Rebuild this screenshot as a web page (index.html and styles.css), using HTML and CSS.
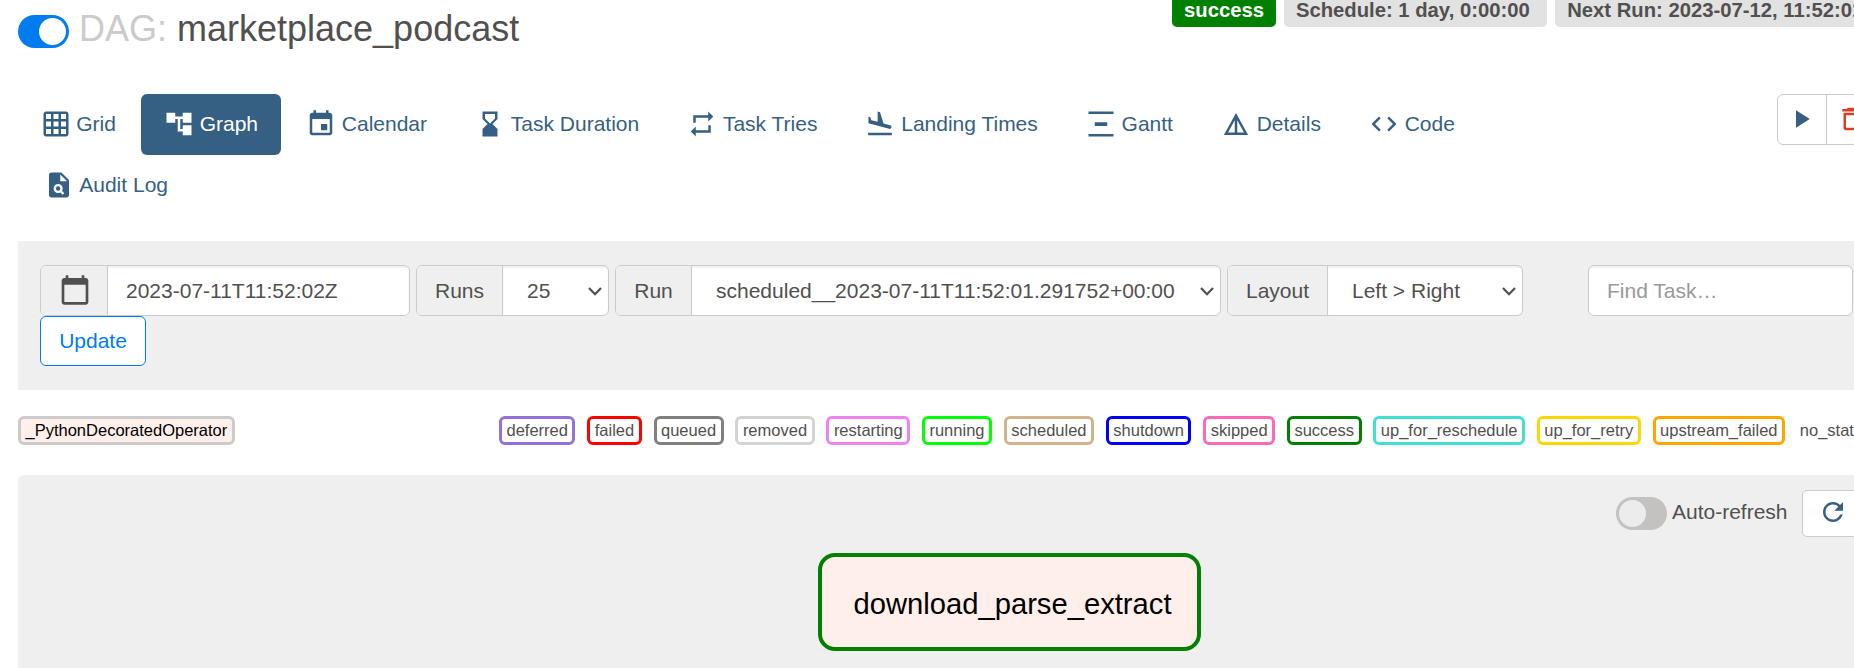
FILE: index.html
```
<!DOCTYPE html>
<html lang="en">
<head>
<meta charset="utf-8">
<title>marketplace_podcast - Graph</title>
<link rel="stylesheet" href="styles.css">
</head>
<body>
<main class="page">
  <header class="head">
    <h3 class="title"><span class="switch on"></span><span class="muted">DAG:</span><span>marketplace_podcast</span></h3>
    <div class="labels">
      <span class="label ok">success</span>
      <span class="label">Schedule: 1 day, 0:00:00</span>
      <span class="label">Next Run: 2023-07-12, 11:52:01</span>
    </div>
  </header>

  <div class="navrow">
    <ul class="pills">
      <li><svg class="icon" viewBox="0 0 24 24"><path d="M20 2H4c-1.100 0-2 .9-2 2v16c0 1.100.9 2 2 2h16c1.100 0 2-.9 2-2V4c0-1.100-.9-2-2-2zM8 20H4v-4h4v4zm0-6H4v-4h4v4zm0-6H4V4h4v4zm6 12h-4v-4h4v4zm0-6h-4v-4h4v4zm0-6h-4V4h4v4zm6 12h-4v-4h4v4zm0-6h-4v-4h4v4zm0-6h-4V4h4v4z"/></svg>Grid</li>
      <li class="active"><svg class="icon" viewBox="0 0 24 24"><path d="M22 11V3h-7v3H9V3H2v8h7V8h2v10h4v3h7v-8h-7v3h-2V8h2v3z"/></svg>Graph</li>
      <li><svg class="icon" viewBox="0 0 24 24"><path d="M17 12h-5v5h5v-5zM16 1v2H8V1H6v2H5c-1.110 0-1.990.9-1.990 2L3 19c0 1.100.890 2 2 2h14c1.100 0 2-.9 2-2V5c0-1.100-.9-2-2-2h-1V1h-2zm3 18H5V8h14v11z"/></svg>Calendar</li>
      <li><svg class="icon" viewBox="0 0 24 24"><path d="M6 2v6h.010L6 8.010 10 12l-4 4 .010.010H6V22h12v-5.990h-.010L18 16l-4-4 4-3.990-.010-.010H18V2H6zm10 5.500l-4 4-4-4V4h8v3.500z"/></svg>Task Duration</li>
      <li><svg class="icon" viewBox="0 0 24 24"><path d="M7 7h10v3l4-4-4-4v3H5v6h2V7zm10 10H7v-3l-4 4 4 4v-3h12v-6h-2v4z"/></svg>Task Tries</li>
      <li><svg class="icon" viewBox="0 0 24 24"><path d="M2.500 19h19v2h-19zM19.340 15.850c.8.210 1.620-.260 1.840-1.060.210-.8-.260-1.620-1.060-1.840l-5.310-1.420-2.760-9.020L10.120 2v8.280L5.150 8.950l-.930-2.320-1.450-.390v5.170l16.570 4.440z"/></svg>Landing Times</li>
      <li><svg class="icon" viewBox="0 0 24 24"><path d="M22 2v2H2V2h20zM7 10.500h10v3H7v-3zM2 20h20v2H2v-2z"/></svg>Gantt</li>
      <li><svg class="icon" viewBox="0 0 24 24"><path d="M12 3.200L2.300 20.800h19.400L12 3.200zm-1 15.600H5.600L11 9v9.800zm2 0V9l5.400 9.800H13z"/></svg>Details</li>
      <li><svg class="icon" viewBox="0 0 24 24"><path d="M9.400 16.600L4.800 12l4.600-4.600L8 6l-6 6 6 6 1.400-1.400zm5.200 0l4.600-4.600-4.600-4.600L16 6l6 6-6 6-1.400-1.400z"/></svg>Code</li>
      <li><svg class="icon" viewBox="0 0 24 24"><path d="M14 2H6c-1.100 0-2 .9-2 2v16c0 1.100.9 2 2 2h12c1.100 0 2-.9 2-2V8l-6-6zm-1 7V3.500L18.500 9H13z"/><circle class="lens" cx="11.300" cy="14.800" r="2.700"/><path class="lens" d="M13.200 16.800l2.400 2.400"/></svg>Audit Log</li>
    </ul>
    <div class="actions">
      <span class="action"><svg class="icon" viewBox="0 0 24 24"><path d="M8 5v14l11-7z"/></svg></span>
      <span class="action danger"><svg class="icon" viewBox="0 0 24 24"><path d="M6 19c0 1.100.9 2 2 2h8c1.100 0 2-.9 2-2V7H6v12zM8 9h8v10H8V9zm7.500-5l-1-1h-5l-1 1H5v2h14V4z"/></svg></span>
    </div>
  </div>

  <section class="filters">
    <div class="filterrow">
      <div class="group date"><span class="addon"><svg class="icon big" viewBox="0 0 24 24"><path d="M20 3h-1V1h-2v2H7V1H5v2H4c-1.100 0-2 .9-2 2v16c0 1.100.9 2 2 2h16c1.100 0 2-.9 2-2V5c0-1.100-.9-2-2-2zm0 18H4V8h16v13z"/></svg></span><span class="field input">2023-07-11T11:52:02Z</span></div>
      <div class="group runs"><span class="addon">Runs</span><span class="field select">25<svg class="chev" viewBox="0 0 14 9"><path d="M1 1l6 6.200L13 1"/></svg></span></div>
      <div class="group run"><span class="addon">Run</span><span class="field select">scheduled__2023-07-11T11:52:01.291752+00:00<svg class="chev" viewBox="0 0 14 9"><path d="M1 1l6 6.200L13 1"/></svg></span></div>
      <div class="group layout"><span class="addon">Layout</span><span class="field select">Left &gt; Right<svg class="chev" viewBox="0 0 14 9"><path d="M1 1l6 6.200L13 1"/></svg></span></div>
      <div class="group find"><span class="field input placeholder">Find Task…</span></div>
    </div>
    <span class="update">Update</span>
  </section>

  <section class="legend">
    <span class="tag operator">_PythonDecoratedOperator</span>
    <div class="states">
      <span class="tag deferred">deferred</span>
      <span class="tag failed">failed</span>
      <span class="tag queued">queued</span>
      <span class="tag removed">removed</span>
      <span class="tag restarting">restarting</span>
      <span class="tag running">running</span>
      <span class="tag scheduled">scheduled</span>
      <span class="tag shutdown">shutdown</span>
      <span class="tag skipped">skipped</span>
      <span class="tag success">success</span>
      <span class="tag reschedule">up_for_reschedule</span>
      <span class="tag retry">up_for_retry</span>
      <span class="tag upstream">upstream_failed</span>
      <span class="tag none">no_status</span>
    </div>
  </section>

  <section class="canvas">
    <div class="refresh">
      <span class="switch"></span><span class="refreshtext">Auto-refresh</span>
      <span class="refreshbtn"><svg class="icon" viewBox="0 0 24 24"><path d="M17.650 6.350C16.200 4.900 14.210 4 12 4c-4.420 0-7.990 3.580-7.990 8s3.570 8 7.990 8c3.730 0 6.840-2.550 7.730-6h-2.080c-.820 2.330-3.040 4-5.650 4-3.310 0-6-2.690-6-6s2.690-6 6-6c1.660 0 3.140.690 4.220 1.780L13 11h7V4l-2.350 2.350z"/></svg></span>
    </div>
    <div class="node">download_parse_extract</div>
  </section>
</main>
</body>
</html>
```
FILE: styles.css
```
* { box-sizing: border-box; }
html, body { margin: 0; height: 668px; overflow: hidden; background: #fff; }
body { font: 21px/30px "Liberation Sans", Arial, sans-serif; color: #51504f; }
.page { width: 1900px; height: 668px; padding-left: 18px; display: flex; flex-direction: column; overflow: hidden; }
.icon { width: 30px; height: 30px; fill: currentColor; flex: none; display: block; }
.icon.big { width: 32px; height: 32px; }
.lens { fill: none; stroke: #fff; stroke-width: 1.900; }

.head { display: flex; height: 94px; flex: none; }
.title { margin: 0; padding-top: 9px; width: 1154px; font-size: 36px; font-weight: 400; line-height: 40px; display: flex; align-items: flex-start; }
.muted { color: #cbcbcb; margin: 0 10px; }
.switch { width: 51px; height: 33px; border-radius: 17px; background: #c4c2c1; padding: 3px; flex: none; display: flex; }
.switch::before { content: ""; width: 27px; height: 27px; border-radius: 50%; background: #edecec; }
.switch.on { background: #017cee; justify-content: flex-end; margin-top: 6px; }
.switch.on::before { background: #fff; }
.labels { display: flex; gap: 8px; align-items: flex-start; }
.label { height: 27px; padding: 0 17.500px 0 12px; line-height: 20px; font-size: 20.250px; font-weight: 700; background: #e2e2e2; border-radius: 0 0 5px 5px; white-space: nowrap; }
.label.ok { background: #008000; color: #fff; padding: 0 12px; }

.navrow { display: flex; height: 147px; flex: none; }
.pills { list-style: none; margin: 0; padding: 0; width: 1560px; display: flex; flex-wrap: wrap; align-content: flex-start; color: #365f84; }
.pills li { display: flex; align-items: center; gap: 5.750px; height: 61px; padding: 0 22.500px 1px; border-radius: 6px; white-space: nowrap; }
.pills li + li { margin-left: 3px; }
.pills .active { background: #365f84; color: #fff; }
.actions { display: flex; height: 51px; margin-left: 198.500px; border: 1.500px solid #cbcbcb; border-radius: 6px; color: #365f84; }
.action { width: 48px; padding: 9px 8px; }
.action + .action { border-left: 1.500px solid #cbcbcb; width: 49px; padding-left: 9px; }
.danger { color: #e43921; }

.filters { height: 149px; flex: none; background: #efefef; padding: 24px 22px; }
.filterrow { display: flex; height: 51px; }
.group { display: flex; height: 51px; border: 1.500px solid #cbcbcb; border-radius: 6px; background: #fff; overflow: hidden; white-space: nowrap; flex: none; }
.addon { background: #efefef; border-right: 1px solid #cbcbcb; display: flex; align-items: center; justify-content: center; flex: none; padding-top: 1px; }
.field { flex: 1; display: flex; align-items: center; box-shadow: inset 0 2px 2px rgba(0,0,0,.06); }
.input { padding-left: 18px; }
.select { padding: 1px 6px 0 24px; justify-content: space-between; }
.placeholder { color: #999; }
.chev { width: 14px; height: 9px; fill: none; stroke: #51504f; stroke-width: 2.200; }
.date { width: 370px; margin-right: 6px; }
.date .addon { width: 67px; padding: 0 0 2px 1px; }
.runs { width: 193px; margin-right: 6px; }
.runs .addon { width: 86px; }
.run { width: 606px; margin-right: 6px; }
.run .addon { width: 76px; }
.layout { width: 296px; margin-right: 65px; }
.layout .addon { width: 100px; }
.find { width: 265px; }
.update { display: inline-flex; align-items: center; justify-content: center; width: 106px; height: 50px; border: 1.500px solid #017cee; border-radius: 6px; background: #fff; color: #017cee; }

.legend { height: 85px; flex: none; padding-top: 26px; display: flex; }
.tag { height: 29px; border: 3px solid; border-radius: 6px; padding: 0 4.500px; font-size: 16.500px; line-height: 23px; white-space: nowrap; }
.operator { width: 217px; border-color: #cbcbcb; background: #ffefeb; color: #000; }
.states { display: flex; gap: 11.800px; margin-left: 264px; }
.deferred { border-color: mediumpurple; }
.failed { border-color: red; }
.queued { border-color: gray; }
.removed { border-color: lightgrey; }
.restarting { border-color: violet; }
.running { border-color: lime; }
.scheduled { border-color: tan; }
.shutdown { border-color: blue; }
.skipped { border-color: hotpink; }
.success { border-color: green; }
.reschedule { border-color: turquoise; }
.retry { border-color: gold; }
.upstream { border-color: orange; }
.none { border-color: transparent; margin-left: -4.500px; }

.canvas { flex: 1; background: #efefef; border-radius: 6px 0 0 0; padding-top: 15px; }
.refresh { display: flex; height: 63px; padding-left: 1598px; align-items: flex-start; }
.refresh .switch { margin-top: 7px; }
.refreshtext { width: 129px; margin: 7px 1px 0 5px; white-space: nowrap; }
.refreshbtn { width: 70px; height: 47px; border: 1.500px solid #cbcbcb; border-radius: 5px; background: #fff; padding: 6px 15px; color: #365f84; }
.node { width: 383px; height: 98px; margin-left: 800px; border: 4.500px solid green; border-radius: 17px; background: #ffefeb; color: #000; font-size: 29.200px; line-height: 95px; padding-left: 6px; text-align: center; white-space: nowrap; }
```
